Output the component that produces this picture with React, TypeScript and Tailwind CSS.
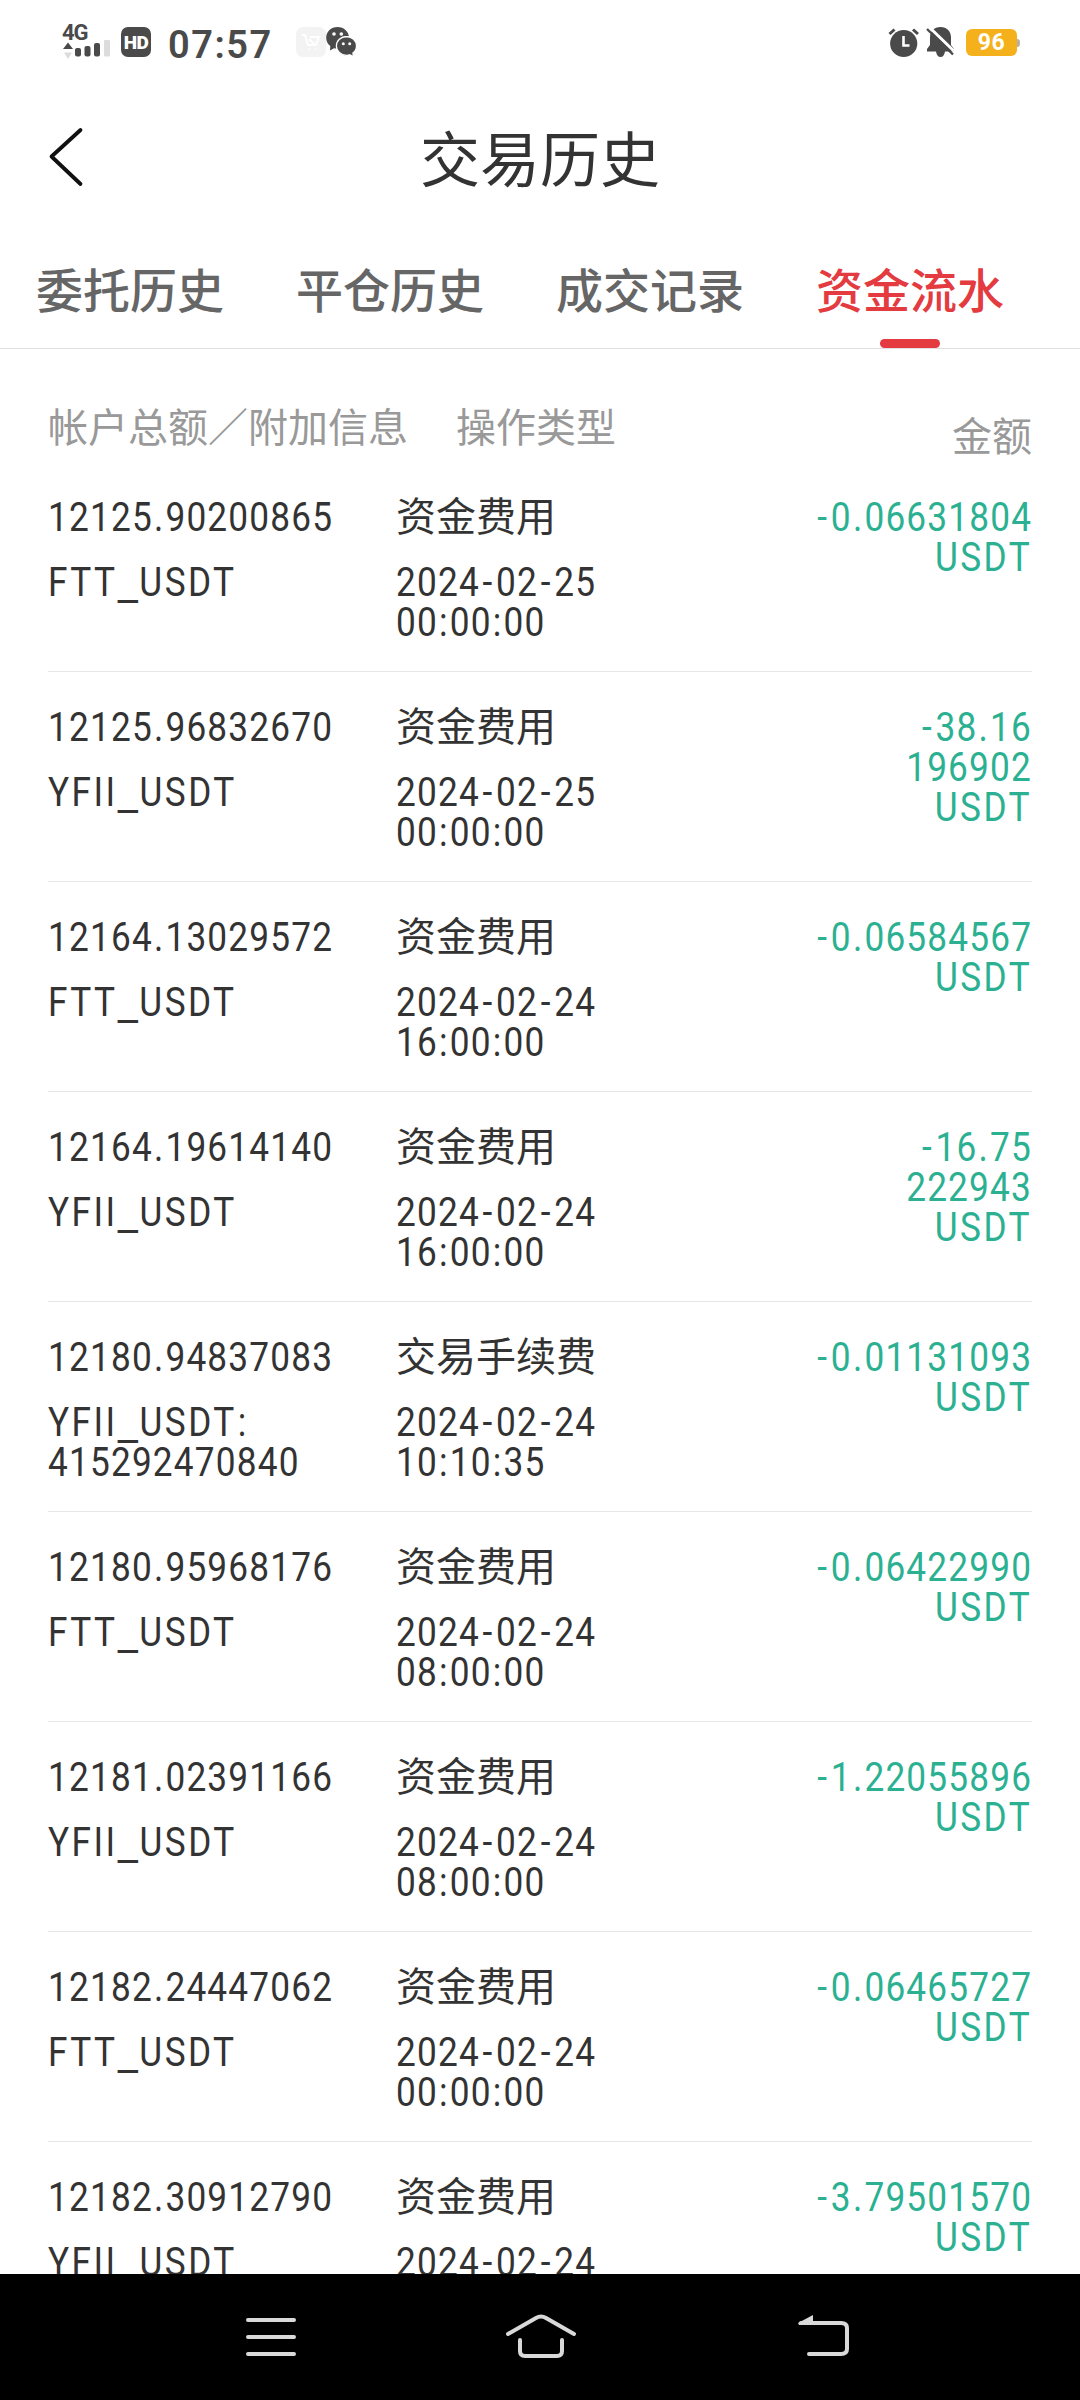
import React from "react";

type Entry = { total: string; info: string[]; type: string; time: string[]; amount: string[] };

const FUNDING = "资金费用";
const entries: Entry[] = [
  { total: "12125.90200865", info: ["FTT_USDT"], type: FUNDING, time: ["2024-02-25", "00:00:00"], amount: ["-0.06631804", "USDT"] },
  { total: "12125.96832670", info: ["YFII_USDT"], type: FUNDING, time: ["2024-02-25", "00:00:00"], amount: ["-38.16", "196902", "USDT"] },
  { total: "12164.13029572", info: ["FTT_USDT"], type: FUNDING, time: ["2024-02-24", "16:00:00"], amount: ["-0.06584567", "USDT"] },
  { total: "12164.19614140", info: ["YFII_USDT"], type: FUNDING, time: ["2024-02-24", "16:00:00"], amount: ["-16.75", "222943", "USDT"] },
  { total: "12180.94837083", info: ["YFII_USDT:", "415292470840"], type: "交易手续费", time: ["2024-02-24", "10:10:35"], amount: ["-0.01131093", "USDT"] },
  { total: "12180.95968176", info: ["FTT_USDT"], type: FUNDING, time: ["2024-02-24", "08:00:00"], amount: ["-0.06422990", "USDT"] },
  { total: "12181.02391166", info: ["YFII_USDT"], type: FUNDING, time: ["2024-02-24", "08:00:00"], amount: ["-1.22055896", "USDT"] },
  { total: "12182.24447062", info: ["FTT_USDT"], type: FUNDING, time: ["2024-02-24", "00:00:00"], amount: ["-0.06465727", "USDT"] },
  { total: "12182.30912790", info: ["YFII_USDT"], type: FUNDING, time: ["2024-02-24", "00:00:00"], amount: ["-3.79501570", "USDT"] },
];

const tabs = ["委托历史", "平仓历史", "成交记录", "资金流水"];

/* One line of condensed figures or latin text; punctuation gets a little extra room. */
function Line({ text, end = false }: { text: string; end?: boolean }) {
  const tracking = /[A-Z]/.test(text) ? "tracking-[2.8px]" : "tracking-[1.35px]";
  const origin = end ? "origin-right" : "origin-left";
  return (
    <div className={`h-10 scale-x-[0.88] whitespace-nowrap font-['Roboto',sans-serif] text-[40px] leading-10 font-[375] ${tracking} ${origin}`}>
      {text.split(/([-.:_])/).map((part, i) =>
        part === "-" ? (
          <span key={i} className="px-[3px]">-</span>
        ) : part === "_" ? (
          <span key={i} className="mr-[4px] inline-block h-10 origin-left translate-y-[4px] scale-x-[1.3]">_</span>
        ) : part === "." || part === ":" ? (
          <span key={i} className="px-[1.2px]">{part}</span>
        ) : (
          part
        ),
      )}
    </div>
  );
}

function StatusBar() {
  return (
    <div className="flex h-[84px] shrink-0 items-start justify-between pr-[60px] pl-[62px] text-[#4a4a4a]">
      <div className="flex items-start pt-[24px]">
        <div className="h-9 w-[50px]">
          <div className="h-4 font-['Roboto',sans-serif] text-[22px] leading-[18px] font-bold tracking-[-1px]">4G</div>
          <svg className="block" width="50" height="20" viewBox="0 0 50 20">
            <path d="M1 9L6 2.500L11 9Z" fill="#4a4a4a" />
            <path d="M2 12.500L6 19L10 12.500Z" fill="#dcdcdc" />
            <rect x="13" y="8" width="6" height="8.500" rx="2" fill="#4a4a4a" />
            <rect x="22.500" y="6" width="6" height="10.500" rx="2" fill="#4a4a4a" />
            <rect x="32" y="3" width="6" height="13.500" rx="2" fill="#4a4a4a" />
            <rect x="42" y="0" width="6" height="16.500" rx="1" fill="#dcdcdc" />
          </svg>
        </div>
        <div className="mt-[3px] ml-[9px] flex h-[30px] w-[30px] items-center justify-center rounded-[7px] bg-[#4a4a4a] font-['Roboto',sans-serif] text-[19px] leading-none font-black tracking-[-0.5px] text-white">
          HD
        </div>
        <div className="mt-[2px] ml-[17px] w-[128px] font-['Roboto',sans-serif] text-[38px] leading-[38px] font-semibold tracking-[1.5px]">07:57</div>
        <div className="mt-[3px] flex">
          <div className="flex h-[30px] w-[30px] items-center justify-center rounded-[7px] bg-[#f3f3f3]">
            <svg width="20" height="18" viewBox="0 0 20 18" fill="none" stroke="#fff" strokeWidth="2">
              <path d="M1 2H4L7 12H15L18 4H9M8 16H9M14 16H15M8 6L14 12" />
            </svg>
          </div>
          <svg width="32" height="30" viewBox="0 0 32 30">
            <path d="M11.500 0C5 0 .2 4.700.2 10.800c0 3.500 1.600 6.400 4.100 8.300L4 23.500l4-2.200c1 .3 2.300.4 3.500.4 6.500 0 11.500-4.900 11.500-10.900S18 0 11.500 0z" fill="#4a4a4a" />
            <path d="M20.500 9.500c-5.700 0-10.100 4.200-10.100 9.400s4.400 9.400 10.100 9.400c1.200 0 2.300-.2 3.300-.5l3.700 2-.6-3.800c2.200-1.700 3.600-4.300 3.600-7.100 0-5.200-4.400-9.400-10-9.400z" fill="#4a4a4a" stroke="#fff" strokeWidth="1.300" />
            <circle cx="8" cy="7" r="1.800" fill="#fff" />
            <circle cx="15.300" cy="7" r="1.800" fill="#fff" />
            <circle cx="17.300" cy="16.800" r="1.500" fill="#fff" />
            <circle cx="23.700" cy="16.800" r="1.500" fill="#fff" />
          </svg>
        </div>
      </div>
      <div className="flex items-start pt-[27px]">
        <svg width="32" height="31" viewBox="0 0 32 31">
          <circle cx="15.700" cy="16.500" r="13.600" fill="#4a4a4a" />
          <path d="M1.500 7L6.500 2.500M30 7L25 2.500" stroke="#4a4a4a" strokeWidth="3" />
          <path d="M15.500 9V18.500H21.500" fill="none" stroke="#fff" strokeWidth="2.600" />
        </svg>
        <svg className="ml-[6px]" width="30" height="31" viewBox="0 0 30 31">
          <path d="M14.500 0C8 0 4 4.500 4 10.500V18L1 22V24.500H10C10.500 28 12 30 14.500 30S18.500 28 19 24.500H28V22L25 18V10.500C25 4.500 21 0 14.500 0Z" fill="#4a4a4a" />
          <path d="M3 0L30 26" stroke="#fff" strokeWidth="3" />
          <path d="M1 2L27 27.500" stroke="#4a4a4a" strokeWidth="2.400" />
        </svg>
        <div className="mt-[2px] ml-[10px] flex items-center">
          <div className="flex h-[27px] w-[51px] items-center justify-center rounded-[6px] bg-[#f5b11c] font-['Roboto',sans-serif] text-[23px] leading-none font-bold tracking-[0.5px] text-white">96</div>
          <div className="h-2 w-[3px] rounded-r-sm bg-[#b5b0a8]" />
        </div>
      </div>
    </div>
  );
}

function SystemNav() {
  return (
    <nav className="flex h-[126px] shrink-0 items-start bg-black pt-[38px] pl-[244px]">
      <svg width="54" height="48" viewBox="0 0 54 48" fill="none" stroke="#d9d9d9" strokeWidth="4" strokeLinecap="round">
        <path d="M4 8H50M4 25H50M4 42H50" />
      </svg>
      <svg className="ml-[206px]" width="74" height="48" viewBox="0 0 74 48" fill="none" stroke="#d9d9d9" strokeWidth="4" strokeLinecap="round">
        <path d="M4 22L32 6Q37 3 42 6L70 22" />
        <path d="M16 28V39Q16 44 21 44H53Q58 44 58 39V28" />
      </svg>
      <svg className="ml-[219px]" width="54" height="48" viewBox="0 0 54 48" fill="none" stroke="#d9d9d9" strokeWidth="4" strokeLinecap="round">
        <path d="M4 11H44Q50 11 50 16V37Q50 42 44 42H12" />
        <path d="M1 11L16 3V12L2 13Z" fill="#d9d9d9" stroke="none" />
      </svg>
    </nav>
  );
}

export default function App() {
  return (
    <div className="flex h-[2400px] w-[1080px] flex-col overflow-hidden bg-white font-['Noto_Sans_CJK_SC',sans-serif] text-[#333]">
      <StatusBar />
      <header className="grid h-[148px] shrink-0 grid-cols-[120px_1fr_120px] items-center">
        <svg className="ml-[46px]" width="40" height="62" viewBox="0 0 40 62" fill="none" stroke="#111" strokeWidth="3.800" strokeLinecap="round" strokeLinejoin="round">
          <path d="M34.500 3L5.500 29.500L34.500 57" />
        </svg>
        <h1 className="pb-[5px] text-center text-[60px] leading-[60px]">交易历史</h1>
      </header>
      <div className="flex h-[117px] shrink-0 border-b border-[#e0e0e0]">
        {tabs.map((tab, i) => (
          <button
            key={tab}
            className={
              i === 3
                ? "relative w-[260px] pb-[3px] text-center text-[47px] font-medium text-[#e33b3f]"
                : "w-[260px] pb-[3px] text-center text-[47px] font-medium text-[#666]"
            }
          >
            {tab}
            {i === 3 && <span className="absolute bottom-0 left-[100px] h-[9px] w-[60px] rounded-full bg-[#e33b3f]" />}
          </button>
        ))}
      </div>
      <main className="min-h-0 flex-1 overflow-hidden px-12">
        <div className="flex h-[113px] pt-[56px] text-[40px] leading-10 text-[#999]">
          <span className="w-[408px]">帐户总额／附加信息</span>
          <span>操作类型</span>
          <span className="ml-auto pt-[9px]">金额</span>
        </div>
        {entries.map((e) => (
          <section key={e.total} className="grid h-[210px] grid-cols-[348px_1fr_auto] border-b border-[#e6e6e6] pt-9">
            <div>
              <Line text={e.total} />
              <div className="mt-[25px]">{e.info.map((t) => <Line key={t} text={t} />)}</div>
            </div>
            <div>
              <div className="-mt-[4px] h-10 text-[40px] leading-10">{e.type}</div>
              <div className="mt-[29px]">{e.time.map((t) => <Line key={t} text={t} />)}</div>
            </div>
            <div className="text-right text-[#2bb192]">{e.amount.map((t) => <Line key={t} text={t} end />)}</div>
          </section>
        ))}
      </main>
      <SystemNav />
    </div>
  );
}
